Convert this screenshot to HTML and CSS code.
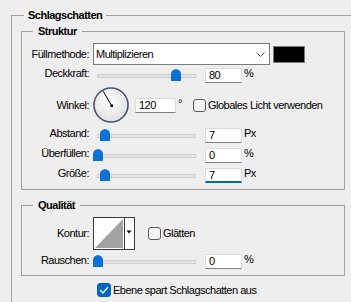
FILE: index.html
```html
<!DOCTYPE html>
<html lang="de">
<head>
<meta charset="utf-8">
<title>Schlagschatten</title>
<link rel="stylesheet" href="styles.css">
</head>
<body>
<fieldset class="group outer">
  <legend>Schlagschatten</legend>

  <fieldset class="group section">
    <legend>Struktur</legend>

    <div class="row r-blend">
      <span class="lbl">Füllmethode:</span>
      <div class="ctrl">
        <div class="select">
          <span>Multiplizieren</span>
          <svg class="chev" width="9" height="5" viewBox="0 0 9 5"><path d="M0.5 0.5 L4.5 4.5 L8.5 0.5" fill="none" stroke="#505050" stroke-width="1"/></svg>
        </div>
        <div class="swatch"></div>
      </div>
    </div>

    <div class="row r-slider">
      <span class="lbl">Deckkraft:</span>
      <div class="ctrl">
        <div class="slider"><div class="track"></div><svg class="thumb" style="left:78px" width="10" height="12" viewBox="0 0 10 12"><path d="M0 5 Q0 1 5 0 Q10 1 10 5 V12 H0 Z" fill="#0a72d4"/></svg></div>
        <div class="num">80</div>
        <span class="unit">%</span>
      </div>
    </div>

    <div class="row r-angle">
      <span class="lbl">Winkel:</span>
      <div class="ctrl">
        <svg class="dial" width="37" height="37" viewBox="0 0 37 37">
          <defs><radialGradient id="dg" cx="45%" cy="40%" r="65%"><stop offset="0" stop-color="#ffffff"/><stop offset="1" stop-color="#dedede"/></radialGradient></defs>
          <circle cx="18" cy="18" r="17" fill="url(#dg)" stroke="#4a5576" stroke-width="1.6"/>
          <line x1="18.5" y1="18.5" x2="10.3" y2="4.3" stroke="#000" stroke-width="1"/>
          <rect x="17.5" y="17.5" width="2.5" height="2.5" fill="#000"/>
        </svg>
        <div class="num wide">120</div>
        <span class="deg">°</span>
        <span class="cb"></span>
        <span class="cbtext">Globales Licht verwenden</span>
      </div>
    </div>

    <div class="row r-slider">
      <span class="lbl">Abstand:</span>
      <div class="ctrl">
        <div class="slider"><div class="track"></div><svg class="thumb" style="left:7px" width="10" height="12" viewBox="0 0 10 12"><path d="M0 5 Q0 1 5 0 Q10 1 10 5 V12 H0 Z" fill="#0a72d4"/></svg></div>
        <div class="num">7</div>
        <span class="unit">Px</span>
      </div>
    </div>

    <div class="row r-slider">
      <span class="lbl">Überfüllen:</span>
      <div class="ctrl">
        <div class="slider"><div class="track"></div><svg class="thumb" style="left:0px" width="10" height="12" viewBox="0 0 10 12"><path d="M0 5 Q0 1 5 0 Q10 1 10 5 V12 H0 Z" fill="#0a72d4"/></svg></div>
        <div class="num">0</div>
        <span class="unit">%</span>
      </div>
    </div>

    <div class="row r-slider">
      <span class="lbl">Größe:</span>
      <div class="ctrl">
        <div class="slider"><div class="track"></div><svg class="thumb" style="left:7px" width="10" height="12" viewBox="0 0 10 12"><path d="M0 5 Q0 1 5 0 Q10 1 10 5 V12 H0 Z" fill="#0a72d4"/></svg></div>
        <div class="num focus">7</div>
        <span class="unit">Px</span>
      </div>
    </div>
  </fieldset>

  <fieldset class="group section quality">
    <legend>Qualität</legend>

    <div class="row r-kontur">
      <span class="lbl">Kontur:</span>
      <div class="ctrl">
        <svg class="contour" width="42" height="33" viewBox="0 0 42 33">
          <rect x="0.5" y="0.5" width="41" height="32" fill="#ffffff" stroke="#3a3a3a"/>
          <polygon points="2,31 30,2 30,31" fill="#a2a2a2"/>
          <line x1="31.5" y1="0.5" x2="31.5" y2="32.5" stroke="#3a3a3a"/>
          <polygon points="33.5,13.5 38.5,13.5 36,16.5" fill="#000"/>
        </svg>
        <span class="cb cb-smooth"></span>
        <span class="cbtext">Glätten</span>
      </div>
    </div>

    <div class="row r-noise">
      <span class="lbl">Rauschen:</span>
      <div class="ctrl">
        <div class="slider"><div class="track"></div><svg class="thumb" style="left:0px" width="10" height="12" viewBox="0 0 10 12"><path d="M0 5 Q0 1 5 0 Q10 1 10 5 V12 H0 Z" fill="#0a72d4"/></svg></div>
        <div class="num">0</div>
        <span class="unit">%</span>
      </div>
    </div>
  </fieldset>

  <div class="knockout">
    <span class="cb checked"><svg width="10" height="8" viewBox="0 0 10 8"><path d="M1 4 L4 7 L9 1" fill="none" stroke="#fff" stroke-width="1.2"/></svg></span>
    <span class="cbtext">Ebene spart Schlagschatten aus</span>
  </div>
</fieldset>
</body>
</html>
```
FILE: styles.css
```css
* { box-sizing: border-box; }
html, body { margin: 0; padding: 0; }
body {
  width: 351px;
  height: 302px;
  overflow: hidden;
  background: #eeeeee;
  font-family: "Liberation Sans", Arial, sans-serif;
  font-size: 11px;
  letter-spacing: -0.5px;
  color: #000;
}

.group {
  margin: 0;
  border: 1px solid #a0a0a0;
  min-inline-size: 0;
}
.group > legend {
  font-weight: bold;
  line-height: 15px;
  padding: 0 4px;
}

.outer {
  margin: 8px 0 0 11px;
  padding: 1px 0 0 9px;
  border-right: 0;
  border-bottom: 0;
  height: 300px;
}
.outer > legend { margin-left: 3px; }

.section {
  width: 324px;
  padding: 4px 0 4px 0;
}
.section > legend {
  margin-left: 11px;
  padding: 0 5px;
}
.quality {
  margin-top: 8px;
  padding: 4px 0 3px 0;
}

.row {
  display: grid;
  grid-template-columns: 67px auto;
  column-gap: 4px;
  align-items: center;
}
.r-blend { height: 22px; }
.r-slider { height: 20px; }
.r-angle { height: 40px; }
.r-kontur { height: 33px; }
.r-noise { height: 22px; }

.lbl {
  text-align: right;
  white-space: nowrap;
  line-height: 13px;
}
.r-slider .lbl { margin-top: -3px; }
.r-noise .lbl { margin-top: -2px; }

.ctrl {
  display: flex;
  align-items: center;
  height: 100%;
}

.select {
  width: 177px;
  height: 22px;
  background: #fff;
  border: 1px solid #7a7a7a;
  display: flex;
  align-items: center;
  justify-content: space-between;
  padding: 0 4px 0 2px;
}
.chev { margin-right: 0; }
.swatch {
  width: 32px;
  height: 17px;
  margin-left: 3px;
  background: #000;
  border: 1px solid #7c7c7c;
}

.slider {
  position: relative;
  width: 107px;
  height: 20px;
  flex: none;
}
.track {
  position: absolute;
  left: 4px;
  top: 9px;
  width: 99px;
  height: 4px;
  background: #e2e2e2;
  border: 1px solid #d0d0d0;
}
.thumb {
  position: absolute;
  top: 4px;
}

.num {
  width: 37px;
  height: 15px;
  margin-left: 5px;
  background: #fff;
  border: 1px solid #dcdcdc;
  border-bottom-color: #808080;
  padding-left: 3px;
  line-height: 13px;
  flex: none;
}
.num.wide { width: 41px; }
.num.focus {
  border-bottom: 2px solid #0067c0;
}
.unit {
  align-self: flex-start;
  margin-top: 2px;
  margin-left: 2px;
  line-height: 13px;
}
.r-noise .unit { margin-top: 3px; }

.dial { flex: none; }
.deg {
  align-self: flex-start;
  margin-top: 12px;
  margin-left: 2px;
  line-height: 13px;
}

.cb {
  width: 13px;
  height: 13px;
  flex: none;
  border: 1px solid #5a5a5a;
  border-radius: 3px;
  background: #f4f4f4;
  margin-left: 11px;
}
.cbtext {
  margin-left: 2px;
  white-space: nowrap;
  line-height: 13px;
}
.contour { flex: none; }
.cb-smooth { margin-left: 13px; }

.knockout {
  display: flex;
  align-items: center;
  height: 14px;
  margin: 7px 0 0 76px;
}
.cb.checked {
  width: 14px;
  height: 14px;
  margin-left: 0;
  background: #0067c0;
  border-color: #0067c0;
  display: flex;
  align-items: center;
  justify-content: center;
}
.knockout .cbtext { margin-left: 2px; }
```
